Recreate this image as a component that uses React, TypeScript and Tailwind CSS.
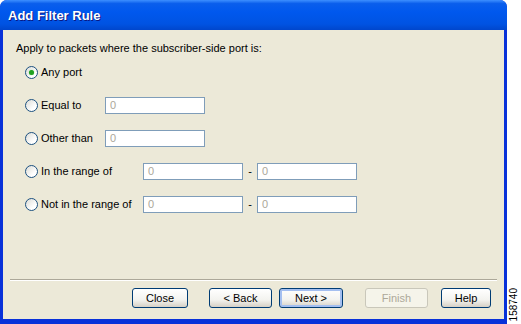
import type { ReactNode } from 'react';

const font = { fontFamily: '"Liberation Sans", Arial, sans-serif' };

const Radio = ({ checked = false }: { checked?: boolean }) => (
  <span className="flex h-[13px] w-[13px] shrink-0 items-center justify-center rounded-full border border-[#1c5180] bg-[linear-gradient(135deg,#dcdcd6,#ffffff_70%)]">
    {checked && <span className="h-[5px] w-[5px] rounded-full bg-[#21a121] shadow-[0_0_1px_#6fd66f]" />}
  </span>
);

const Field = () => (
  <div className="flex h-[17px] w-[100px] items-center border border-[#7f9db9] bg-white pl-[4px] text-[#aca899]">
    0
  </div>
);

const Row = ({ label, w, children, checked }: { label: string; w: string; children?: ReactNode; checked?: boolean }) => (
  <div className="flex h-[17px] items-center">
    <Radio checked={checked} />
    <span className={`ml-[3px] ${w}`}>{label}</span>
    {children}
  </div>
);

const Range = () => (
  <>
    <Field />
    <span className="w-[14px] text-center">-</span>
    <Field />
  </>
);

const Btn = ({ children, className = '', disabled = false, focus = false }: { children: ReactNode; className?: string; disabled?: boolean; focus?: boolean }) => (
  <div
    className={`flex h-[20px] items-center justify-center rounded-[3px] border ${
      disabled
        ? 'border-[#c9c7ba] bg-[#f5f4ea] text-[#aca899]'
        : 'border-[#003c74] bg-[linear-gradient(180deg,#ffffff,#f3f3ef_60%,#d6d0c5)] text-black'
    } ${focus ? 'shadow-[inset_0_0_0_2px_#a4bff0]' : ''} ${className}`}
  >
    {children}
  </div>
);

export default function App() {
  return (
    <div className="flex h-[324px] w-[521px] bg-white text-[11px] text-black" style={font}>
      <div className="flex w-[507px] flex-col overflow-hidden rounded-t-[7px] bg-[#0831d9]">
        <div className="flex h-[30px] shrink-0 items-center bg-[linear-gradient(180deg,#3d8fff_0%,#0a5eec_12%,#0058ee_40%,#0053e2_80%,#0046cc_100%)] pl-[8px] pt-[2px] text-[13px] font-bold text-white [text-shadow:1px_1px_0_#0a1882]">
          Add Filter Rule
        </div>
        <div className="mx-[3px] mb-[5px] flex flex-1 flex-col bg-[#ece9d8]">
          <div className="pl-[13px] pt-[11px] leading-[14px]">Apply to packets where the subscriber-side port is:</div>
          <div className="mt-[9px] flex flex-col gap-[16px] pl-[22px]">
            <Row label="Any port" w="w-[64px]" checked />
            <Row label="Equal to" w="w-[64px]">
              <Field />
            </Row>
            <Row label="Other than" w="w-[64px]">
              <Field />
            </Row>
            <Row label="In the range of" w="w-[102px]">
              <Range />
            </Row>
            <Row label="Not in the range of" w="w-[102px]">
              <Range />
            </Row>
          </div>
          <div className="flex-1" />
          <div className="mx-[7px] border-t border-b border-t-[#aca899] border-b-white" />
          <div className="mb-[11px] mt-[7px] flex justify-end pr-[13px]">
            <Btn className="w-[56px]">Close</Btn>
            <Btn className="ml-[21px] w-[63px]">&lt; Back</Btn>
            <Btn className="ml-[7px] w-[64px]" focus>Next &gt;</Btn>
            <Btn className="ml-[22px] w-[63px]" disabled>Finish</Btn>
            <Btn className="ml-[13px] w-[50px]">Help</Btn>
          </div>
        </div>
      </div>
      <div className="flex flex-1 items-end justify-center pb-[3px]">
        <span className="rotate-180 text-[10px] leading-[10px] [writing-mode:vertical-rl]">158740</span>
      </div>
    </div>
  );
}
